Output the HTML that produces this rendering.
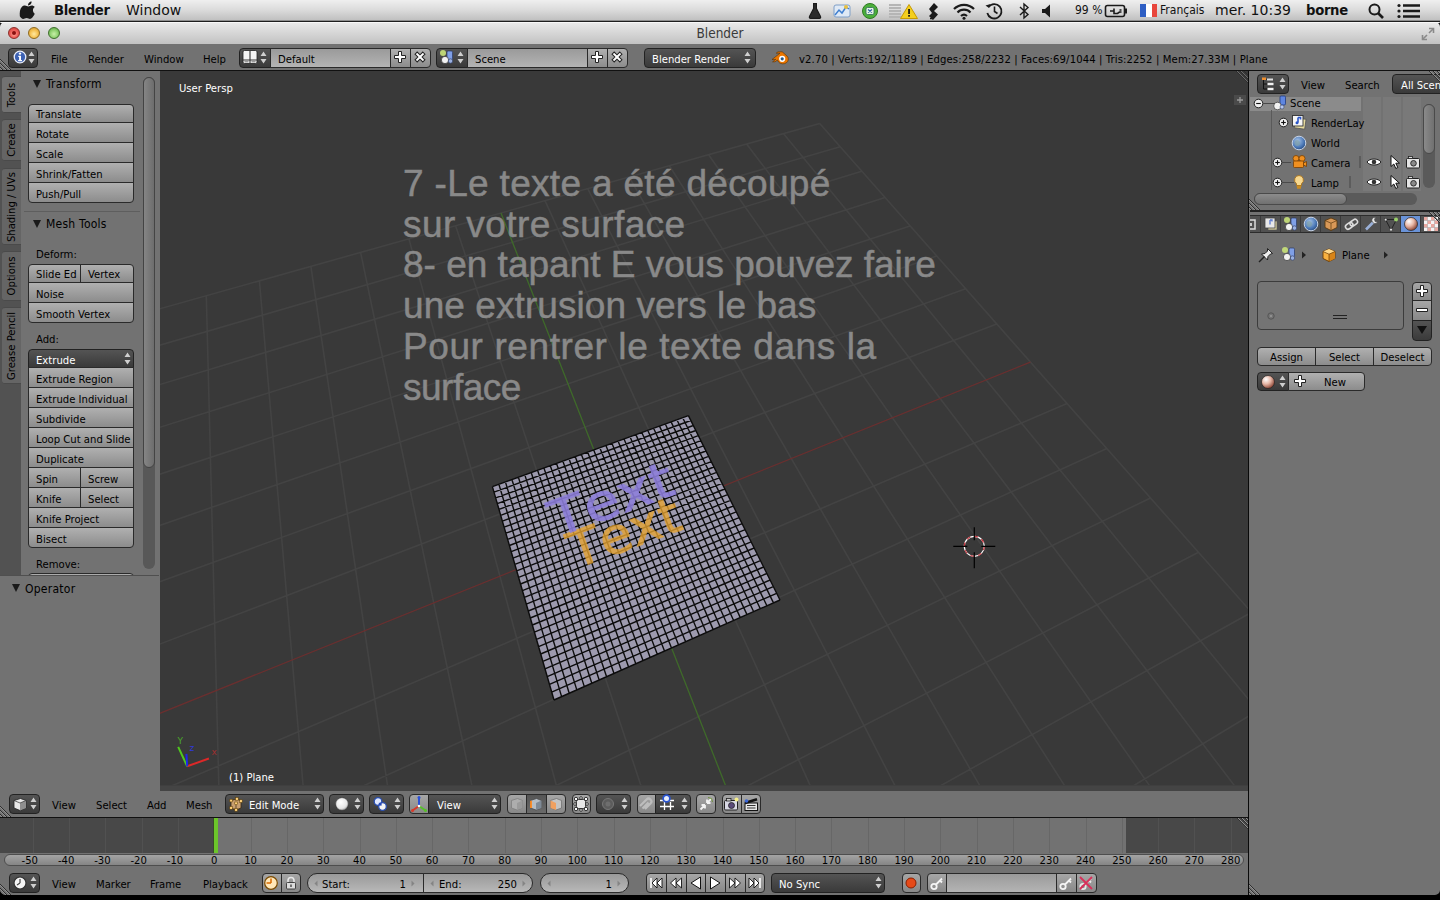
<!DOCTYPE html><html lang="fr"><head><meta charset="utf-8"><title>Blender</title><style>

*{box-sizing:border-box;margin:0;padding:0}
html,body{width:1440px;height:900px;overflow:hidden;background:#727272}
#titlebar:before{content:"";position:absolute;left:0;top:0;width:1440px;height:1px;background:#f8f8f8;border-radius:5px 5px 0 0}
body{position:relative;font-family:"DejaVu Sans Condensed","DejaVu Sans","Liberation Sans",sans-serif;font-size:11.2px;letter-spacing:0;color:#000;line-height:1}
.abs{position:absolute}
#macbar{left:0;top:0;width:1440px;height:22px;background:linear-gradient(#efefef,#dcdcdc 45%,#bebebe);border-bottom:1px solid #1e1e1e;box-shadow:inset 0 -1px 0 #8e8e8e}
#macbar span{position:absolute;top:3px;font-size:14px;letter-spacing:0;font-family:"DejaVu Sans","Liberation Sans",sans-serif;color:#111;white-space:nowrap}
#titlebar{left:0;top:22px;width:1440px;height:22px;background:linear-gradient(#ebebeb,#d6d6d6 50%,#c2c2c2);border-radius:5px 5px 0 0}
#titlebar .t{position:absolute;left:0;width:1440px;text-align:center;top:5px;font-size:13.5px;letter-spacing:0;color:#3a3a3a;font-family:"DejaVu Sans Condensed","DejaVu Sans","Liberation Sans",sans-serif}
.tl{position:absolute;top:5px;width:12px;height:12px;border-radius:6px;border:1px solid #555}
.hdr{background:#727272}
.txt{position:absolute;white-space:nowrap}
.w{color:#fff}
.btn{position:absolute;height:21px;border:1px solid #2a2a2a;background:linear-gradient(#b0b0b0,#8c8c8c);padding:4px 0 0 7px;white-space:nowrap;overflow:hidden}
.rt{border-top-left-radius:4px;border-top-right-radius:4px}
.rb{height:20px;border-bottom-left-radius:4px;border-bottom-right-radius:4px}
.rl{border-top-left-radius:4px;border-bottom-left-radius:4px}
.rr{border-top-right-radius:4px;border-bottom-right-radius:4px}
.ra{border-radius:4px}
.menu{position:absolute;height:19px;border:1px solid #222;background:linear-gradient(#545454,#3a3a3a);color:#fff;padding:4px 0 0 7px;white-space:nowrap;overflow:hidden}
.fld{position:absolute;height:19px;border:1px solid #2a2a2a;background:linear-gradient(#9a9a9a,#b4b4b4);padding:5px 0 0 7px;white-space:nowrap;overflow:hidden}
.num{position:absolute;height:19px;border:1px solid #2a2a2a;background:linear-gradient(#999,#b8b8b8);white-space:nowrap;overflow:hidden}
.ph{position:absolute;font-size:12px;letter-spacing:.25px;white-space:nowrap}
.tri{position:absolute;width:0;height:0;border-left:4px solid transparent;border-right:4px solid transparent;border-top:8px solid #1a1a1a}
.ud{position:absolute;width:7px;height:12px}
.tab{position:absolute;left:2px;width:19px;background:#646464;border-radius:3px 0 0 3px;border-top:1px solid #4a4a4a;border-bottom:1px solid #4a4a4a}
.tab span{position:absolute;left:50%;top:50%;transform:translate(-50%,-50%) rotate(-90deg);white-space:nowrap}

</style></head><body>
<div id="macbar" class="abs"><svg class="abs" style="left:19px;top:1px" width="18" height="19" viewBox="0 0 18 19"><path d="M12.2 0.5c.1 1.2-.4 2.300-1.100 3.100-.7.8-1.800 1.400-2.800 1.300-.1-1.100.4-2.300 1.100-3 .7-.8 1.900-1.400 2.800-1.400zM15.600 13.800c-.5 1.100-.7 1.600-1.400 2.600-.9 1.400-2.200 3.100-3.700 3.100-1.400 0-1.800-.9-3.700-.9s-2.300.9-3.700.9c-1.600 0-2.800-1.600-3.700-2.900C-.9 12.800-.6 8.400 1.500 6.500c1-1 2.300-1.500 3.500-1.500 1.500 0 2.400.9 3.700.9 1.200 0 1.900-.9 3.700-.9 1.100 0 2.300.6 3.200 1.600-2.800 1.600-2.300 5.600 0 7.200z" fill="#1a1a1a" transform="scale(.92) translate(1.5,0)"/></svg><svg class="abs" style="left:806px;top:2px" width="18" height="18" viewBox="0 0 18 18"><path d="M7 1.500h4M7.600 1.500v5L3.500 14.500a1.200 1.200 0 0 0 1 1.800h9a1.200 1.200 0 0 0 1-1.800L10.400 6.500v-5" fill="#2a2a2a" stroke="#1a1a1a" stroke-width="1.200"/></svg><svg class="abs" style="left:832px;top:2px" width="20" height="18" viewBox="0 0 20 18"><rect x="2" y="3" width="16" height="12" rx="2" fill="#dfe9f5" stroke="#7f9fc8" stroke-width="1"/><path d="M3 13l4-5 3 3 4-6 3 2" fill="none" stroke="#3f7fd0" stroke-width="1.500"/><circle cx="14" cy="5" r="2" fill="#e8c040"/></svg><svg class="abs" style="left:861px;top:2px" width="18" height="18" viewBox="0 0 18 18"><circle cx="9" cy="9" r="7.500" fill="#4caf3a" stroke="#2e7a22" stroke-width="1"/><rect x="5" y="5.500" width="8" height="7" rx="1.500" fill="#e8f6e0" stroke="#2e6a5a" stroke-width=".8"/><path d="M7 7.500l4 3M11 7.500l-4 3" stroke="#2a5aa8" stroke-width="1.200"/></svg><svg class="abs" style="left:888px;top:2px" width="32" height="18" viewBox="0 0 32 18"><path d="M1 3h12M1 6h12M1 9h12M1 12h12M1 15h12" stroke="#b5b5b5" stroke-width="2"/><path d="M21 2.500L29.500 16.500H12.500z" fill="#f4cf1e" stroke="#c79a00" stroke-width="1" stroke-linejoin="round"/><rect x="20.200" y="7" width="1.700" height="5" fill="#111"/><rect x="20.200" y="13" width="1.700" height="1.700" fill="#111"/></svg><svg class="abs" style="left:925px;top:1px" width="18" height="20" viewBox="0 0 18 20"><path d="M9 2l4 4-4 4 4 3.500-5 5.500-4-4 3-3-3-4z" fill="#1a1a1a"/><path d="M5 17.500h3" stroke="#1a1a1a" stroke-width="1.500"/></svg><svg class="abs" style="left:952px;top:2px" width="24" height="18" viewBox="0 0 24 18"><path d="M2 7a14 14 0 0 1 20 0" fill="none" stroke="#1a1a1a" stroke-width="2.200"/><path d="M5.500 10.500a9 9 0 0 1 13 0" fill="none" stroke="#1a1a1a" stroke-width="2.200"/><path d="M9 14a4.500 4.500 0 0 1 6 0" fill="none" stroke="#1a1a1a" stroke-width="2.200"/><circle cx="12" cy="16.300" r="1.500" fill="#1a1a1a"/></svg><svg class="abs" style="left:984px;top:1px" width="20" height="20" viewBox="0 0 20 20"><path d="M4.500 6A7.200 7.200 0 1 1 3.300 12" fill="none" stroke="#1a1a1a" stroke-width="1.800"/><path d="M1.500 4.500l3.500 2.500 1.500-4z" fill="#1a1a1a"/><path d="M10.500 5.500v5l3 2" fill="none" stroke="#1a1a1a" stroke-width="1.600"/></svg><svg class="abs" style="left:1017px;top:2px" width="14" height="18" viewBox="0 0 14 18"><path d="M3 5l8 7.500-4 3.500V2l4 3.500-8 7.500" fill="none" stroke="#1a1a1a" stroke-width="1.400"/></svg><svg class="abs" style="left:1040px;top:3px" width="16" height="16" viewBox="0 0 16 16"><path d="M2 6h3l5-4.500v13L5 10H2z" fill="#1a1a1a"/></svg><svg class="abs" style="left:1104px;top:3px" width="24" height="16" viewBox="0 0 24 16"><rect x="1.500" y="2.500" width="19" height="11" rx="2" fill="none" stroke="#1a1a1a" stroke-width="1.600"/><rect x="21" y="5.500" width="2" height="5" fill="#1a1a1a"/><path d="M6 8h4M10 5.500v5h3.500l2-1.500h2M15.500 7h2" stroke="#1a1a1a" stroke-width="1.600" fill="none"/></svg><svg class="abs" style="left:1140px;top:4px" width="18" height="14" viewBox="0 0 18 14"><rect x="0" y="0" width="6" height="13" fill="#2f5fc4"/><rect x="6" y="0" width="6" height="13" fill="#fff"/><rect x="12" y="0" width="5" height="13" fill="#e8463c"/></svg><svg class="abs" style="left:1367px;top:2px" width="18" height="18" viewBox="0 0 18 18"><circle cx="7.500" cy="7.500" r="5" fill="none" stroke="#1a1a1a" stroke-width="2"/><path d="M11 11l5 5" stroke="#1a1a1a" stroke-width="2.600"/></svg><svg class="abs" style="left:1397px;top:3px" width="24" height="16" viewBox="0 0 24 16"><path d="M6 2.500h17M6 8h17M6 13.500h17" stroke="#1a1a1a" stroke-width="2.600"/><circle cx="2" cy="2.500" r="1.600" fill="#1a1a1a"/><circle cx="2" cy="8" r="1.600" fill="#1a1a1a"/><circle cx="2" cy="13.500" r="1.600" fill="#1a1a1a"/></svg><span style="left:54px;top:4px;font-weight:bold;font-size:13.200px;letter-spacing:-.3px">Blender</span><span style="left:126px">Window</span><span style="left:1075px;font-size:12px;top:4px;font-family:'DejaVu Sans Condensed',sans-serif">99 %</span><span style="left:1160px;font-size:12px;top:4px;font-family:'DejaVu Sans Condensed',sans-serif">Français</span><span style="left:1215px">mer. 10:39</span><span style="left:1306px;top:4px;font-weight:bold;font-size:13.200px;letter-spacing:-.3px">borne</span></div>
<div class="abs" style="left:0;top:22px;width:1440px;height:6px;background:#111"></div><div id="titlebar" class="abs"><div class="tl" style="left:8px;border-color:#8c2e2a;background:radial-gradient(circle at 50% 60%,#ffb0a0 0,#f0605a 45%,#c43a34 100%)"></div><div class="abs" style="left:12px;top:9px;width:4px;height:4px;border-radius:2px;background:#8a0f0f"></div><div class="tl" style="left:28px;border-color:#8f6a1e;background:radial-gradient(circle at 50% 60%,#ffe9a0 0,#f4c050 50%,#c8922a 100%)"></div><div class="tl" style="left:48px;border-color:#3f6e2c;background:radial-gradient(circle at 50% 60%,#c8f0a8 0,#8fd070 50%,#4f9a38 100%)"></div><div class="t">Blender</div><svg class="abs" style="left:1421px;top:5px" width="14" height="14" viewBox="0 0 14 14"><path d="M8 1.500h4.500V6M6 12.500H1.500V8" fill="none" stroke="#8a8a8a" stroke-width="1.600"/><path d="M12 2L8 6M2 12l4-4" stroke="#8a8a8a" stroke-width="1.600"/></svg></div>
<div class="abs hdr" style="left:0;top:44px;width:1440px;height:26px"></div><div class="abs" style="left:0;top:70px;width:1440px;height:1px;background:#111"></div><div class="menu ra" style="left:8px;top:48px;width:30px;height:20px"></div><svg class="abs" style="left:28px;top:51px" width="7" height="13" viewBox="0 0 7 13"><path d="M3.5 0.5L6.5 5H0.5Z M3.5 12.5L6.5 8H0.5Z" fill="#cfcfcf"/></svg><div class="txt" style="left:51px;top:54px">File</div><div class="txt" style="left:88px;top:54px">Render</div><div class="txt" style="left:144px;top:54px">Window</div><div class="txt" style="left:203px;top:54px">Help</div><div class="menu rl" style="left:239px;top:48px;width:32px;height:20px"></div><svg class="abs" style="left:260px;top:51px" width="7" height="13" viewBox="0 0 7 13"><path d="M3.5 0.5L6.5 5H0.5Z M3.5 12.5L6.5 8H0.5Z" fill="#cfcfcf"/></svg><div class="fld" style="left:270px;top:48px;width:121px;height:20px">Default</div><div class="btn" style="left:390px;top:48px;width:21px;height:20px"></div><div class="btn rr" style="left:410px;top:48px;width:21px;height:20px"></div><div class="menu rl" style="left:436px;top:48px;width:32px;height:20px"></div><svg class="abs" style="left:457px;top:51px" width="7" height="13" viewBox="0 0 7 13"><path d="M3.5 0.5L6.5 5H0.5Z M3.5 12.5L6.5 8H0.5Z" fill="#cfcfcf"/></svg><div class="fld" style="left:467px;top:48px;width:121px;height:20px">Scene</div><div class="btn" style="left:587px;top:48px;width:21px;height:20px"></div><div class="btn rr" style="left:607px;top:48px;width:21px;height:20px"></div><div class="menu ra" style="left:644px;top:48px;width:112px;height:20px;padding-top:5px">Blender Render</div><svg class="abs" style="left:744px;top:51px" width="7" height="13" viewBox="0 0 7 13"><path d="M3.5 0.5L6.5 5H0.5Z M3.5 12.5L6.5 8H0.5Z" fill="#cfcfcf"/></svg><svg class="abs" style="left:12px;top:49px" width="16" height="16" viewBox="0 0 16 16"><circle cx="8" cy="8" r="5.800" fill="#3d62b3" stroke="#e8eefc" stroke-width="1.300"/><circle cx="8" cy="4.600" r="1.200" fill="#fff"/><path d="M6.300 6.800h2.700v4.200h1v1.200h-3.900v-1.200h1v-3h-.8z" fill="#fff"/></svg><svg class="abs" style="left:242px;top:49px" width="16" height="16" viewBox="0 0 16 16"><rect x="1" y="1.500" width="14" height="13" rx="1.500" fill="#f4f4f4" stroke="#222" stroke-width=".8"/><path d="M8 1.500v13M1 11h14" stroke="#333" stroke-width="1.100"/><path d="M2.500 12.800h4M9.500 12.800h4" stroke="#555" stroke-width=".8"/></svg><svg class="abs" style="left:439px;top:49px" width="16" height="16" viewBox="0 0 16 16"><circle cx="4" cy="4" r="3" fill="#c9e27a" opacity=".9"/><rect x="8" y="2" width="5.500" height="9" rx="1.200" fill="#7f9fe6" stroke="#2b3a66" stroke-width=".7"/><circle cx="6" cy="11" r="3.600" fill="#f2f2f2" stroke="#333" stroke-width=".7"/><circle cx="11.500" cy="12" r="2.200" fill="#9ab0e0" stroke="#2b3a66" stroke-width=".6"/></svg><svg class="abs" style="left:393px;top:50px" width="14" height="14" viewBox="0 0 14 14"><path d="M5.500 1.500h3v4h4v3h-4v4h-3v-4h-4v-3h4z" fill="#fff" stroke="#222" stroke-width="1"/></svg><svg class="abs" style="left:413px;top:50px" width="14" height="14" viewBox="0 0 14 14"><path d="M5.500 1.500h3v4h4v3h-4v4h-3v-4h-4v-3h4z" fill="#fff" stroke="#222" stroke-width="1" transform="rotate(45 7 7)"/></svg><svg class="abs" style="left:590px;top:50px" width="14" height="14" viewBox="0 0 14 14"><path d="M5.500 1.500h3v4h4v3h-4v4h-3v-4h-4v-3h4z" fill="#fff" stroke="#222" stroke-width="1"/></svg><svg class="abs" style="left:610px;top:50px" width="14" height="14" viewBox="0 0 14 14"><path d="M5.500 1.500h3v4h4v3h-4v4h-3v-4h-4v-3h4z" fill="#fff" stroke="#222" stroke-width="1" transform="rotate(45 7 7)"/></svg><svg class="abs" style="left:771px;top:50px" width="18" height="16" viewBox="0 0 18 16"><path d="M1 9.500L9 3.200H5.200L7 1.800h4.200L16 6c1.500 1.500 1.700 3.800.6 5.500-1.400 2.200-4.600 3-7.200 1.800-1.500-.7-2.500-1.900-2.900-3.300L4 11.800H1.600L4.800 9.300z" fill="#ea7600" stroke="#5a3000" stroke-width=".6"/><circle cx="11.200" cy="8.800" r="3.100" fill="#fff"/><circle cx="11.200" cy="8.800" r="1.600" fill="#265787"/></svg><div class="txt" style="left:799px;top:54px;letter-spacing:.12px">v2.70 | Verts:192/1189 | Edges:258/2232 | Faces:69/1044 | Tris:2252 | Mem:27.33M | Plane</div>
<div class="abs" style="left:0;top:71px;width:21px;height:504px;background:#525252"></div><div class="abs" style="left:21px;top:71px;width:138px;height:504px;background:#727272"></div><div class="tab" style="top:76px;height:37px;background:#727272"><span>Tools</span></div><div class="tab" style="top:119px;height:42px;background:#656565"><span>Create</span></div><div class="tab" style="top:168px;height:77px;background:#656565"><span>Shading / UVs</span></div><div class="tab" style="top:251px;height:50px;background:#656565"><span>Options</span></div><div class="tab" style="top:307px;height:77px;background:#656565"><span>Grease Pencil</span></div><div class="tri" style="left:33px;top:80px"></div><div class="ph" style="left:46px;top:78px">Transform</div><div class="btn" style="left:28px;top:104px;width:106px;height:19px;padding-top:4px;border-top-left-radius:4px;border-top-right-radius:4px;">Translate</div><div class="btn" style="left:28px;top:122px;width:106px;height:21px;padding-top:6px;">Rotate</div><div class="btn" style="left:28px;top:142px;width:106px;height:21px;padding-top:6px;">Scale</div><div class="btn" style="left:28px;top:162px;width:106px;height:21px;padding-top:6px;">Shrink/Fatten</div><div class="btn" style="left:28px;top:182px;width:106px;height:21px;padding-top:6px;border-bottom-left-radius:4px;border-bottom-right-radius:4px;">Push/Pull</div><div class="abs" style="left:24px;top:211px;width:116px;height:1px;background:#5e5e5e"></div><div class="tri" style="left:33px;top:220px"></div><div class="ph" style="left:46px;top:218px">Mesh Tools</div><div class="txt" style="left:36px;top:249px">Deform:</div><div class="btn" style="left:28px;top:264px;width:53px;height:19px;padding-top:4px;border-top-left-radius:4px;">Slide Ed</div><div class="btn" style="left:80px;top:264px;width:54px;height:19px;padding-top:4px;border-top-right-radius:4px;">Vertex</div><div class="btn" style="left:28px;top:282px;width:106px;height:21px;padding-top:6px;">Noise</div><div class="btn" style="left:28px;top:302px;width:106px;height:21px;padding-top:6px;border-bottom-left-radius:4px;border-bottom-right-radius:4px;">Smooth Vertex</div><div class="txt" style="left:36px;top:334px">Add:</div><div class="menu" style="left:28px;top:349px;width:106px;height:19px;padding-top:5px;border-top-left-radius:4px;border-top-right-radius:4px;">Extrude</div><div class="btn" style="left:28px;top:367px;width:106px;height:21px;padding-top:6px;">Extrude Region</div><div class="btn" style="left:28px;top:387px;width:106px;height:21px;padding-top:6px;">Extrude Individual</div><div class="btn" style="left:28px;top:407px;width:106px;height:21px;padding-top:6px;">Subdivide</div><div class="btn" style="left:28px;top:427px;width:106px;height:21px;padding-top:6px;">Loop Cut and Slide</div><div class="btn" style="left:28px;top:447px;width:106px;height:21px;padding-top:6px;">Duplicate</div><div class="btn" style="left:28px;top:467px;width:53px;height:21px;padding-top:6px;">Spin</div><div class="btn" style="left:80px;top:467px;width:54px;height:21px;padding-top:6px;">Screw</div><div class="btn" style="left:28px;top:487px;width:53px;height:21px;padding-top:6px;">Knife</div><div class="btn" style="left:80px;top:487px;width:54px;height:21px;padding-top:6px;">Select</div><div class="btn" style="left:28px;top:507px;width:106px;height:21px;padding-top:6px;">Knife Project</div><div class="btn" style="left:28px;top:527px;width:106px;height:21px;padding-top:6px;border-bottom-left-radius:4px;border-bottom-right-radius:4px;">Bisect</div><svg class="abs" style="left:124px;top:352px" width="7" height="13" viewBox="0 0 7 13"><path d="M3.5 0.5L6.5 5H0.5Z M3.5 12.5L6.5 8H0.5Z" fill="#cfcfcf"/></svg><div class="txt" style="left:36px;top:559px">Remove:</div><div class="btn rt" style="left:28px;top:573px;width:106px;height:3px"></div><div class="abs" style="left:143px;top:77px;width:12px;height:492px;border-radius:6px;background:#585858"></div><div class="abs" style="left:143px;top:77px;width:12px;height:391px;border-radius:6px;background:linear-gradient(90deg,#858585,#6d6d6d);border:1px solid #444"></div><div class="abs" style="left:0;top:575px;width:159px;height:216px;background:#727272;border-top:1px solid #4f4f4f"></div><div class="tri" style="left:12px;top:584px"></div><div class="ph" style="left:25px;top:583px">Operator</div>
<div class="abs" style="left:160px;top:71px;width:1088px;height:720px;background:#393939;overflow:hidden"><svg class="abs" style="left:0;top:0" width="1088" height="720" viewBox="0 0 1088 720"><path d="M-220.0 1860.8L-65.4 256.1M-220.0 1860.8L1289.9 765.9M-61.9 1746.1L-8.6 240.1M-196.1 1613.1L1216.0 682.3M82.5 1641.4L46.3 224.7M-176.5 1409.6L1150.3 607.9M215.0 1545.3L99.4 209.8M-160.2 1239.5L1091.5 541.3M337.0 1456.8L150.9 195.4M-146.3 1095.1L1038.5 481.3M449.7 1375.1L200.6 181.4M-134.3 971.1L990.5 427.0M554.2 1299.4L248.9 167.8M-123.9 863.3L946.8 377.6M651.2 1229.0L295.6 154.7M-114.8 768.9L907.0 332.5M826.0 1102.3L385.0 129.6M-99.6 611.1L836.7 252.9M905.0 1045.0L427.7 117.7M-93.2 544.6L805.6 217.7M979.1 991.2L469.1 106.0M-87.5 484.6L776.8 185.1M1048.7 940.7L509.4 94.7M-82.2 430.3L750.0 154.9M1114.3 893.2L548.6 83.7M-77.5 380.8L725.1 126.6M1176.1 848.3L586.6 73.0M-73.1 335.7L701.9 100.3M1234.6 806.0L623.6 62.7M-69.1 294.2L680.1 75.7M1289.9 765.9L659.7 52.5M-65.4 256.1L659.7 52.5" stroke="#434343" stroke-width="1.6" fill="none"/>
<path d="M-106.8 685.4L870.4 291.1" stroke="#6b2f2f" stroke-width="1.3" fill="none"/>
<path d="M741.6 1163.5L341.0 142.0" stroke="#3f6a2a" stroke-width="1.3" fill="none"/>
<polygon points="332.4,415.6 528.4,344.6 620.0,529.0 394.0,629.0" fill="#9d9aae"/><path d="M332.4 415.6L528.4 344.6M332.4 415.6L394.0 629.0M334.0 421.2L530.8 349.5M338.9 413.2L401.6 625.6M335.7 426.9L533.3 354.5M345.4 410.9L409.2 622.3M337.3 432.6L535.8 359.5M351.9 408.5L416.8 618.9M339.0 438.4L538.3 364.6M358.4 406.2L424.3 615.6M340.7 444.3L540.9 369.7M364.8 403.9L431.8 612.3M342.4 450.2L543.4 374.8M371.2 401.5L439.2 609.0M344.1 456.2L546.0 380.0M377.6 399.2L446.6 605.7M345.9 462.2L548.6 385.3M383.9 396.9L454.0 602.5M347.6 468.3L551.3 390.6M390.2 394.6L461.3 599.2M349.4 474.5L553.9 396.0M396.5 392.4L468.6 596.0M351.2 480.7L556.6 401.4M402.8 390.1L475.8 592.8M353.0 487.1L559.3 406.9M409.0 387.8L483.0 589.6M354.9 493.4L562.1 412.4M415.2 385.6L490.2 586.4M356.7 499.9L564.8 418.0M421.4 383.4L497.3 583.3M358.6 506.4L567.6 423.6M427.6 381.1L504.5 580.1M360.5 513.0L570.5 429.3M433.7 378.9L511.5 577.0M362.4 519.6L573.3 435.0M439.8 376.7L518.6 573.9M364.4 526.3L576.2 440.9M445.9 374.5L525.6 570.8M366.3 533.1L579.1 446.7M451.9 372.3L532.5 567.7M368.3 540.0L582.1 452.7M458.0 370.1L539.4 564.6M370.3 547.0L585.1 458.7M464.0 367.9L546.3 561.6M372.4 554.0L588.1 464.7M470.0 365.8L553.2 558.6M374.4 561.1L591.1 470.8M475.9 363.6L560.0 555.5M376.5 568.3L594.2 477.0M481.8 361.5L566.8 552.5M378.6 575.6L597.3 483.3M487.7 359.3L573.6 549.5M380.7 583.0L600.4 489.6M493.6 357.2L580.3 546.6M382.9 590.4L603.6 496.0M499.5 355.1L587.0 543.6M385.0 597.9L606.8 502.5M505.3 353.0L593.7 540.7M387.2 605.6L610.1 509.0M511.1 350.9L600.3 537.7M389.5 613.3L613.3 515.6M516.9 348.8L606.9 534.8M391.7 621.1L616.6 522.3M522.7 346.7L613.5 531.9M394.0 629.0L620.0 529.0M528.4 344.6L620.0 529.0" stroke="#0c0c0c" stroke-width="1.4" fill="none"/><g opacity=".78"><text transform="matrix(0.9880,-0.3620,0.3300,0.9400,415.5,498.0)" font-family="DejaVu Sans,Liberation Sans,sans-serif" font-size="50" fill="#eaa631" stroke="#eaa631" stroke-width="0.9" style="font-kerning:none">Text</text></g><g opacity=".88"><text transform="matrix(1.0940,-0.4000,0.3300,0.9400,396.6,466.5)" font-family="DejaVu Sans,Liberation Sans,sans-serif" font-size="50" fill="#8e7fdc" stroke="#8e7fdc" stroke-width="0.9" style="font-kerning:none">Text</text></g><g transform="translate(814.3,475.3)"><circle r="10" fill="none" stroke="#fff" stroke-width="1.2"/><circle r="10" fill="none" stroke="#c8323c" stroke-width="1.2" stroke-dasharray="3.9 3.9"/><path d="M-21 0H-7M7 0H21M0 -19V-6M0 6V22" stroke="#000" stroke-width="1.2"/></g><g transform="translate(1.5,2)"><g stroke-width="2" fill="none"><path d="M25.700 693.300L47.400 685.500" stroke="#dc2828"/><path d="M25.700 693.300L16.700 673.900" stroke="#50c81e"/><path d="M25.700 693.300L24.900 680.900" stroke="#1e28e6"/></g><text x="50" y="682" font-size="9" fill="#a03030" font-family="DejaVu Sans,sans-serif">x</text><text x="16" y="671" font-size="9" fill="#4aa52a" font-family="DejaVu Sans,sans-serif">Y</text><text x="28" y="678" font-size="9" fill="#3038d8" font-family="DejaVu Sans,sans-serif">z</text></g><g stroke="#2c2c2c" stroke-width="1"><path d="M1076 0l12 12M1080 0l8 8M1084 0l4 4"/></g><g stroke="#6a6a6a" stroke-width="1"><path d="M1077 0l11 11M1081 0l7 7"/></g><rect x="1074" y="24" width="12" height="10" fill="#4a4a4a"/><path d="M1077 29h6M1080 26v6" stroke="#9a9a9a" stroke-width="1.3"/></svg><div class="abs" style="left:0;top:714px;width:1088px;height:6px;background:#444;border-top:1px solid #3f3f3f"></div><div class="txt w" style="left:19px;top:12px">User Persp</div><div class="txt w" style="left:69px;top:701px">(1) Plane</div><div class="txt" style="left:243px;top:93.8px;font-family:'Liberation Sans',sans-serif;font-size:37px;letter-spacing:0.32px;color:#898989;-webkit-text-stroke:.5px #898989">7 -Le texte a été découpé</div><div class="txt" style="left:243px;top:134.6px;font-family:'Liberation Sans',sans-serif;font-size:37px;letter-spacing:0.41px;color:#898989;-webkit-text-stroke:.5px #898989">sur votre surface</div><div class="txt" style="left:243px;top:175.4px;font-family:'Liberation Sans',sans-serif;font-size:37px;letter-spacing:0px;color:#898989;-webkit-text-stroke:.5px #898989">8- en tapant E vous pouvez faire</div><div class="txt" style="left:243px;top:216.2px;font-family:'Liberation Sans',sans-serif;font-size:37px;letter-spacing:0.08px;color:#898989;-webkit-text-stroke:.5px #898989">une extrusion vers le bas</div><div class="txt" style="left:243px;top:257.0px;font-family:'Liberation Sans',sans-serif;font-size:37px;letter-spacing:0.59px;color:#898989;-webkit-text-stroke:.5px #898989">Pour rentrer le texte dans la</div><div class="txt" style="left:243px;top:297.8px;font-family:'Liberation Sans',sans-serif;font-size:37px;letter-spacing:-0.5px;color:#898989;-webkit-text-stroke:.5px #898989">surface</div></div>
<div class="abs hdr" style="left:0;top:791px;width:1248px;height:26px"></div><div class="abs" style="left:0;top:817px;width:1248px;height:1px;background:#111"></div><div class="menu ra" style="left:9px;top:794px;width:31px;height:20px;padding-left:7px;padding-top:5px"></div><svg class="abs" style="left:30px;top:797px" width="7" height="13" viewBox="0 0 7 13"><path d="M3.5 0.5L6.5 5H0.5Z M3.5 12.5L6.5 8H0.5Z" fill="#cfcfcf"/></svg><div class="txt" style="left:52px;top:800px">View</div><div class="txt" style="left:96px;top:800px">Select</div><div class="txt" style="left:147px;top:800px">Add</div><div class="txt" style="left:186px;top:800px">Mesh</div><div class="menu ra" style="left:225px;top:794px;width:99px;height:20px;padding-left:23px;padding-top:5px">Edit Mode</div><svg class="abs" style="left:314px;top:797px" width="7" height="13" viewBox="0 0 7 13"><path d="M3.5 0.5L6.5 5H0.5Z M3.5 12.5L6.5 8H0.5Z" fill="#cfcfcf"/></svg><div class="menu ra" style="left:329px;top:794px;width:35px;height:20px;padding-left:7px;padding-top:5px"></div><svg class="abs" style="left:354px;top:797px" width="7" height="13" viewBox="0 0 7 13"><path d="M3.5 0.5L6.5 5H0.5Z M3.5 12.5L6.5 8H0.5Z" fill="#cfcfcf"/></svg><div class="menu ra" style="left:369px;top:794px;width:35px;height:20px;padding-left:7px;padding-top:5px"></div><svg class="abs" style="left:394px;top:797px" width="7" height="13" viewBox="0 0 7 13"><path d="M3.5 0.5L6.5 5H0.5Z M3.5 12.5L6.5 8H0.5Z" fill="#cfcfcf"/></svg><div class="btn rl" style="left:409px;top:794px;width:20px;height:20px;padding:0;background:linear-gradient(#a6a6a6,#888)"></div><div class="menu rr" style="left:428px;top:794px;width:73px;height:20px;padding-left:8px;padding-top:5px">View</div><svg class="abs" style="left:491px;top:797px" width="7" height="13" viewBox="0 0 7 13"><path d="M3.5 0.5L6.5 5H0.5Z M3.5 12.5L6.5 8H0.5Z" fill="#cfcfcf"/></svg><div class="btn rl" style="left:507px;top:794px;width:20px;height:20px;padding:0;background:linear-gradient(#a6a6a6,#888)"></div><div class="btn " style="left:526px;top:794px;width:21px;height:20px;padding:0;background:linear-gradient(#555,#6a6a6a)"></div><div class="btn rr" style="left:546px;top:794px;width:20px;height:20px;padding:0;background:linear-gradient(#a6a6a6,#888)"></div><div class="btn ra" style="left:572px;top:794px;width:19px;height:20px;padding:0;background:linear-gradient(#a6a6a6,#888)"></div><div class="menu ra" style="left:596px;top:794px;width:35px;height:20px;padding-left:7px;padding-top:5px"></div><svg class="abs" style="left:621px;top:797px" width="7" height="13" viewBox="0 0 7 13"><path d="M3.5 0.5L6.5 5H0.5Z M3.5 12.5L6.5 8H0.5Z" fill="#cfcfcf"/></svg><div class="btn rl" style="left:637px;top:794px;width:19px;height:20px;padding:0;background:linear-gradient(#a6a6a6,#888)"></div><div class="menu rr" style="left:655px;top:794px;width:36px;height:20px;padding-left:7px;padding-top:5px"></div><svg class="abs" style="left:681px;top:797px" width="7" height="13" viewBox="0 0 7 13"><path d="M3.5 0.5L6.5 5H0.5Z M3.5 12.5L6.5 8H0.5Z" fill="#cfcfcf"/></svg><div class="btn ra" style="left:696px;top:794px;width:20px;height:20px;padding:0;background:linear-gradient(#a6a6a6,#888)"></div><div class="btn rl" style="left:722px;top:794px;width:20px;height:20px;padding:0;background:linear-gradient(#a6a6a6,#888)"></div><div class="btn rr" style="left:741px;top:794px;width:20px;height:20px;padding:0;background:linear-gradient(#a6a6a6,#888)"></div><svg class="abs" style="left:12px;top:796px" width="16" height="16" viewBox="0 0 16 16"><path d="M2 4.500L8.500 2.500 14 4.500V12L8 14.500 2 12z" fill="#e9e9e9" stroke="#222" stroke-width=".8"/><path d="M8 7v7.500L14 12V4.500z" fill="#8f8f8f"/><path d="M2 4.500L8 7 14 4.500" fill="none" stroke="#333" stroke-width=".7"/></svg><svg class="abs" style="left:228px;top:796px" width="16" height="16" viewBox="0 0 16 16"><path d="M3 4.500L9 3l4 2v7l-5 2-5-2z" fill="#c9a071" stroke="#3a2a10" stroke-width=".8"/><path d="M8 7v7" stroke="#3a2a10" stroke-width=".7"/><g fill="#ffd27a" stroke="#5a3a00" stroke-width=".5"><rect x="1.800" y="3.300" width="2.600" height="2.600"/><rect x="7.600" y="1.600" width="2.600" height="2.600"/><rect x="11.600" y="3.800" width="2.600" height="2.600"/><rect x="6.800" y="6" width="2.600" height="2.600"/><rect x="1.800" y="10.600" width="2.600" height="2.600"/><rect x="6.800" y="12.600" width="2.600" height="2.600"/></g></svg><svg class="abs" style="left:334px;top:796px" width="16" height="16" viewBox="0 0 16 16"><defs><radialGradient id="sg" cx=".4" cy=".35" r=".7"><stop offset="0" stop-color="#fff"/><stop offset=".7" stop-color="#e6e6e6"/><stop offset="1" stop-color="#9a9a9a"/></radialGradient></defs><circle cx="8" cy="8" r="6.300" fill="url(#sg)" stroke="#333" stroke-width=".5"/></svg><svg class="abs" style="left:372px;top:796px" width="16" height="16" viewBox="0 0 16 16"><circle cx="6" cy="5.500" r="3.800" fill="#dfe8ff" stroke="#2a4fb0" stroke-width="1.300"/><circle cx="10.500" cy="10.500" r="3.800" fill="#f4f4f4" stroke="#2a4fb0" stroke-width="1.300"/><rect x="6.800" y="6.800" width="2.800" height="2.800" fill="#2447b8"/></svg><svg class="abs" style="left:410px;top:795px" width="18" height="18" viewBox="0 0 18 18"><path d="M9 11V2.500" stroke="#2a50d8" stroke-width="2"/><path d="M9 11L2.500 15.500" stroke="#d83a2a" stroke-width="2"/><path d="M9 11L15.500 15.500" stroke="#57c02a" stroke-width="2"/><circle cx="9" cy="2.500" r="1.500" fill="#2a50d8"/><circle cx="2.500" cy="15.500" r="1.500" fill="#d83a2a"/><circle cx="15.500" cy="15.500" r="1.500" fill="#57c02a"/><circle cx="9" cy="11" r="1.300" fill="#fff"/></svg><svg class="abs" style="left:509px;top:796px" width="16" height="16" viewBox="0 0 16 16"><path d="M2.500 4.500L8.500 2.500 13.500 4.500V12L8 14 2.500 12z" fill="#adadad" stroke="#7a7a7a" stroke-width=".7"/><path d="M8 7v7L13.500 12V4.500z" fill="#9a9a9a"/></svg><svg class="abs" style="left:528px;top:796px" width="16" height="16" viewBox="0 0 16 16"><path d="M2.500 4.500L8.500 2.500 13.500 4.500V12L8 14 2.500 12z" fill="#b4bcc4" stroke="#444" stroke-width=".7"/><path d="M8 7v7L13.500 12V4.500z" fill="#7f8a96"/><path d="M3 4.800V12" stroke="#ff8a1e" stroke-width="1.800"/></svg><svg class="abs" style="left:548px;top:796px" width="16" height="16" viewBox="0 0 16 16"><path d="M2.500 4.500L8.500 2.500 13.500 4.500V12L8 14 2.500 12z" fill="#c4c4c4" stroke="#6a6a6a" stroke-width=".7"/><path d="M2.500 4.500L8 7v7L2.500 12z" fill="#f0a060"/></svg><svg class="abs" style="left:573px;top:796px" width="16" height="16" viewBox="0 0 16 16"><rect x="3.500" y="3.500" width="9" height="9" rx="2" fill="#e8e8e8" stroke="#222" stroke-width=".8"/><g fill="#fff" stroke="#111" stroke-width=".8"><circle cx="3" cy="3" r="1.700"/><circle cx="13" cy="3" r="1.700"/><circle cx="3" cy="13" r="1.700"/><circle cx="13" cy="13" r="1.700"/><circle cx="8" cy="2" r="1.300"/><circle cx="14" cy="8" r="1.300"/><circle cx="2" cy="8" r="1.300"/><circle cx="8" cy="14" r="1.300"/></g></svg><svg class="abs" style="left:600px;top:796px" width="16" height="16" viewBox="0 0 16 16"><circle cx="8" cy="8" r="5.500" fill="#5c5c5c" stroke="#777" stroke-width="1"/><circle cx="8" cy="8" r="2.500" fill="#6e6e6e"/></svg><svg class="abs" style="left:638px;top:796px" width="16" height="16" viewBox="0 0 16 16"><path d="M3 12.500L9.500 6a2.800 2.800 0 0 1 4 4L8 15.500M5.500 15L11.500 9" fill="none" stroke="#bdbdbd" stroke-width="2.200" transform="translate(-1,-2.500)"/></svg><svg class="abs" style="left:658px;top:794px" width="18" height="18" viewBox="0 0 18 18"><path d="M2 12.500h14M2 6.500h5M11 6.500h5M6.500 3v13M12.500 8v8" stroke="#fff" stroke-width="1.300"/><circle cx="8.500" cy="4.500" r="3.400" fill="#e8eefc" stroke="#2a55d0" stroke-width="1.800"/></svg><svg class="abs" style="left:698px;top:796px" width="16" height="16" viewBox="0 0 16 16"><path d="M13.500 2.500L9 7M9 7V3.500M9 7h3.500M2.500 13.500L7 9M7 9v3.500M7 9H3.500" fill="none" stroke="#f2f2f2" stroke-width="1.800"/><path d="M13.500 2.500L10 1.500M13.500 2.500l1 3.500" stroke="#6d8f3a" stroke-width="1"/></svg><svg class="abs" style="left:723px;top:796px" width="16" height="16" viewBox="0 0 16 16"><rect x="1.500" y="4.500" width="13" height="9.500" rx="1.200" fill="#d8d8e4" stroke="#222" stroke-width="1"/><rect x="3.500" y="2.500" width="4.500" height="2.500" fill="#ccc" stroke="#222" stroke-width=".8"/><circle cx="8.500" cy="9.500" r="3" fill="#5a4a7a" stroke="#222" stroke-width=".8"/><circle cx="13.500" cy="3.500" r="2" fill="#f7f08a"/></svg><svg class="abs" style="left:743px;top:796px" width="16" height="16" viewBox="0 0 16 16"><rect x="2" y="7" width="12.500" height="7.500" fill="#e8e8e8" stroke="#111" stroke-width="1"/><path d="M2 7L14 3.200" stroke="#111" stroke-width="2.600"/><path d="M4 9.500h8.500M4 12h8.500" stroke="#333" stroke-width="1"/><circle cx="3.500" cy="5" r="1.800" fill="#3a66d8"/></svg>
<div class="abs" style="left:0;top:818px;width:1248px;height:35px;background:#727272"></div><div class="abs" style="left:0;top:818px;width:214px;height:35px;background:#484848"></div><div class="abs" style="left:1126px;top:818px;width:122px;height:35px;background:#484848"></div><div class="abs" style="left:32.8px;top:818px;width:1px;height:35px;background:rgba(255,255,255,0.05)"></div><div class="abs" style="left:69.1px;top:818px;width:1px;height:35px;background:rgba(255,255,255,0.05)"></div><div class="abs" style="left:105.4px;top:818px;width:1px;height:35px;background:rgba(255,255,255,0.05)"></div><div class="abs" style="left:141.7px;top:818px;width:1px;height:35px;background:rgba(255,255,255,0.05)"></div><div class="abs" style="left:178.0px;top:818px;width:1px;height:35px;background:rgba(255,255,255,0.05)"></div><div class="abs" style="left:214.3px;top:818px;width:1px;height:35px;background:rgba(0,0,0,0.09)"></div><div class="abs" style="left:250.6px;top:818px;width:1px;height:35px;background:rgba(0,0,0,0.09)"></div><div class="abs" style="left:286.9px;top:818px;width:1px;height:35px;background:rgba(0,0,0,0.09)"></div><div class="abs" style="left:323.2px;top:818px;width:1px;height:35px;background:rgba(0,0,0,0.09)"></div><div class="abs" style="left:359.5px;top:818px;width:1px;height:35px;background:rgba(0,0,0,0.09)"></div><div class="abs" style="left:395.8px;top:818px;width:1px;height:35px;background:rgba(0,0,0,0.09)"></div><div class="abs" style="left:432.1px;top:818px;width:1px;height:35px;background:rgba(0,0,0,0.09)"></div><div class="abs" style="left:468.4px;top:818px;width:1px;height:35px;background:rgba(0,0,0,0.09)"></div><div class="abs" style="left:504.7px;top:818px;width:1px;height:35px;background:rgba(0,0,0,0.09)"></div><div class="abs" style="left:541.0px;top:818px;width:1px;height:35px;background:rgba(0,0,0,0.09)"></div><div class="abs" style="left:577.3px;top:818px;width:1px;height:35px;background:rgba(0,0,0,0.09)"></div><div class="abs" style="left:613.6px;top:818px;width:1px;height:35px;background:rgba(0,0,0,0.09)"></div><div class="abs" style="left:649.9px;top:818px;width:1px;height:35px;background:rgba(0,0,0,0.09)"></div><div class="abs" style="left:686.2px;top:818px;width:1px;height:35px;background:rgba(0,0,0,0.09)"></div><div class="abs" style="left:722.5px;top:818px;width:1px;height:35px;background:rgba(0,0,0,0.09)"></div><div class="abs" style="left:758.8px;top:818px;width:1px;height:35px;background:rgba(0,0,0,0.09)"></div><div class="abs" style="left:795.1px;top:818px;width:1px;height:35px;background:rgba(0,0,0,0.09)"></div><div class="abs" style="left:831.4px;top:818px;width:1px;height:35px;background:rgba(0,0,0,0.09)"></div><div class="abs" style="left:867.7px;top:818px;width:1px;height:35px;background:rgba(0,0,0,0.09)"></div><div class="abs" style="left:904.0px;top:818px;width:1px;height:35px;background:rgba(0,0,0,0.09)"></div><div class="abs" style="left:940.3px;top:818px;width:1px;height:35px;background:rgba(0,0,0,0.09)"></div><div class="abs" style="left:976.6px;top:818px;width:1px;height:35px;background:rgba(0,0,0,0.09)"></div><div class="abs" style="left:1012.9px;top:818px;width:1px;height:35px;background:rgba(0,0,0,0.09)"></div><div class="abs" style="left:1049.2px;top:818px;width:1px;height:35px;background:rgba(0,0,0,0.09)"></div><div class="abs" style="left:1085.5px;top:818px;width:1px;height:35px;background:rgba(0,0,0,0.09)"></div><div class="abs" style="left:1121.8px;top:818px;width:1px;height:35px;background:rgba(0,0,0,0.09)"></div><div class="abs" style="left:1158.1px;top:818px;width:1px;height:35px;background:rgba(255,255,255,0.05)"></div><div class="abs" style="left:1194.4px;top:818px;width:1px;height:35px;background:rgba(255,255,255,0.05)"></div><div class="abs" style="left:1230.7px;top:818px;width:1px;height:35px;background:rgba(255,255,255,0.05)"></div><div class="abs" style="left:213px;top:818px;width:5px;height:35px;background:#6cc52b;border-left:1px solid #3a4a2a"></div><div class="abs" style="left:4px;top:854px;width:1240px;height:12px;border-radius:6px;background:linear-gradient(#a4a4a4,#858585);border:1px solid #4e4e4e"></div><div class="txt" style="left:9.8px;top:855px;width:40px;text-align:center">-50</div><div class="txt" style="left:46.1px;top:855px;width:40px;text-align:center">-40</div><div class="txt" style="left:82.4px;top:855px;width:40px;text-align:center">-30</div><div class="txt" style="left:118.7px;top:855px;width:40px;text-align:center">-20</div><div class="txt" style="left:155.0px;top:855px;width:40px;text-align:center">-10</div><div class="txt" style="left:194.3px;top:855px;width:40px;text-align:center">0</div><div class="txt" style="left:230.6px;top:855px;width:40px;text-align:center">10</div><div class="txt" style="left:266.9px;top:855px;width:40px;text-align:center">20</div><div class="txt" style="left:303.2px;top:855px;width:40px;text-align:center">30</div><div class="txt" style="left:339.5px;top:855px;width:40px;text-align:center">40</div><div class="txt" style="left:375.8px;top:855px;width:40px;text-align:center">50</div><div class="txt" style="left:412.1px;top:855px;width:40px;text-align:center">60</div><div class="txt" style="left:448.4px;top:855px;width:40px;text-align:center">70</div><div class="txt" style="left:484.7px;top:855px;width:40px;text-align:center">80</div><div class="txt" style="left:521.0px;top:855px;width:40px;text-align:center">90</div><div class="txt" style="left:557.3px;top:855px;width:40px;text-align:center">100</div><div class="txt" style="left:593.6px;top:855px;width:40px;text-align:center">110</div><div class="txt" style="left:629.9px;top:855px;width:40px;text-align:center">120</div><div class="txt" style="left:666.2px;top:855px;width:40px;text-align:center">130</div><div class="txt" style="left:702.5px;top:855px;width:40px;text-align:center">140</div><div class="txt" style="left:738.8px;top:855px;width:40px;text-align:center">150</div><div class="txt" style="left:775.1px;top:855px;width:40px;text-align:center">160</div><div class="txt" style="left:811.4px;top:855px;width:40px;text-align:center">170</div><div class="txt" style="left:847.7px;top:855px;width:40px;text-align:center">180</div><div class="txt" style="left:884.0px;top:855px;width:40px;text-align:center">190</div><div class="txt" style="left:920.3px;top:855px;width:40px;text-align:center">200</div><div class="txt" style="left:956.6px;top:855px;width:40px;text-align:center">210</div><div class="txt" style="left:992.9px;top:855px;width:40px;text-align:center">220</div><div class="txt" style="left:1029.2px;top:855px;width:40px;text-align:center">230</div><div class="txt" style="left:1065.5px;top:855px;width:40px;text-align:center">240</div><div class="txt" style="left:1101.8px;top:855px;width:40px;text-align:center">250</div><div class="txt" style="left:1138.1px;top:855px;width:40px;text-align:center">260</div><div class="txt" style="left:1174.4px;top:855px;width:40px;text-align:center">270</div><div class="txt" style="left:1210.7px;top:855px;width:40px;text-align:center">280</div><div class="abs hdr" style="left:0;top:869px;width:1248px;height:26px"></div><div class="menu ra" style="left:9px;top:873px;width:31px;height:20px;padding-left:7px;padding-top:5px"></div><svg class="abs" style="left:30px;top:876px" width="7" height="13" viewBox="0 0 7 13"><path d="M3.5 0.5L6.5 5H0.5Z M3.5 12.5L6.5 8H0.5Z" fill="#cfcfcf"/></svg><div class="txt" style="left:52px;top:879px">View</div><div class="txt" style="left:96px;top:879px">Marker</div><div class="txt" style="left:150px;top:879px">Frame</div><div class="txt" style="left:203px;top:879px">Playback</div><div class="btn rl" style="left:262px;top:873px;width:20px;height:20px;padding:0;background:linear-gradient(#a6a6a6,#888)"></div><div class="btn rr" style="left:281px;top:873px;width:20px;height:20px;padding:0;background:linear-gradient(#a6a6a6,#888)"></div><div class="num" style="left:307px;top:873px;width:117px;height:20px;border-radius:10px 0 0 10px"></div><div class="num" style="left:423px;top:873px;width:110px;height:20px;border-radius:0 10px 10px 0"></div><div class="txt" style="left:322px;top:879px">Start:</div><div class="txt" style="left:394px;top:879px;width:12px;text-align:right">1</div><div class="txt" style="left:439px;top:879px">End:</div><div class="txt" style="left:488px;top:879px;width:29px;text-align:right">250</div><div class="num" style="left:540px;top:873px;width:89px;height:20px;border-radius:10px"></div><div class="txt" style="left:598px;top:879px;width:14px;text-align:right">1</div><svg class="abs" style="left:314px;top:880px" width="4" height="7" viewBox="0 0 4 7"><path d="M3.500 0.500L0.500 3.500 3.500 6.500z" fill="#848484"/></svg><svg class="abs" style="left:411px;top:880px" width="4" height="7" viewBox="0 0 4 7"><path d="M0.500 0.500L3.500 3.500 0.500 6.500z" fill="#848484"/></svg><svg class="abs" style="left:430px;top:880px" width="4" height="7" viewBox="0 0 4 7"><path d="M3.500 0.500L0.500 3.500 3.500 6.500z" fill="#848484"/></svg><svg class="abs" style="left:522px;top:880px" width="4" height="7" viewBox="0 0 4 7"><path d="M0.500 0.500L3.500 3.500 0.500 6.500z" fill="#848484"/></svg><svg class="abs" style="left:547px;top:880px" width="4" height="7" viewBox="0 0 4 7"><path d="M3.500 0.500L0.500 3.500 3.500 6.500z" fill="#848484"/></svg><svg class="abs" style="left:617px;top:880px" width="4" height="7" viewBox="0 0 4 7"><path d="M0.500 0.500L3.500 3.500 0.500 6.500z" fill="#848484"/></svg><div class="btn rl" style="left:646px;top:873px;width:21px;height:20px;padding:0;background:linear-gradient(#a6a6a6,#888)"></div><div class="btn " style="left:665.8px;top:873px;width:21px;height:20px;padding:0;background:linear-gradient(#a6a6a6,#888)"></div><div class="btn " style="left:685.5999999999999px;top:873px;width:21px;height:20px;padding:0;background:linear-gradient(#a6a6a6,#888)"></div><div class="btn " style="left:705.3999999999999px;top:873px;width:21px;height:20px;padding:0;background:linear-gradient(#a6a6a6,#888)"></div><div class="btn " style="left:725.1999999999998px;top:873px;width:21px;height:20px;padding:0;background:linear-gradient(#a6a6a6,#888)"></div><div class="btn rr" style="left:744.9999999999998px;top:873px;width:20px;height:20px;padding:0;background:linear-gradient(#a6a6a6,#888)"></div><div class="menu ra" style="left:771px;top:873px;width:114px;height:20px;padding-left:7px;padding-top:5px">No Sync</div><svg class="abs" style="left:875px;top:876px" width="7" height="13" viewBox="0 0 7 13"><path d="M3.5 0.5L6.5 5H0.5Z M3.5 12.5L6.5 8H0.5Z" fill="#cfcfcf"/></svg><div class="btn ra" style="left:902px;top:873px;width:19px;height:20px;padding:0;background:linear-gradient(#a6a6a6,#888)"></div><div class="btn rl" style="left:927px;top:873px;width:20px;height:20px;padding:0;background:linear-gradient(#a6a6a6,#888)"></div><div class="fld" style="left:946px;top:873px;width:111px;height:20px"></div><div class="btn " style="left:1056px;top:873px;width:21px;height:20px;padding:0;background:linear-gradient(#a6a6a6,#888)"></div><div class="btn rr" style="left:1076px;top:873px;width:21px;height:20px;padding:0;background:linear-gradient(#a6a6a6,#888)"></div><svg class="abs" style="left:12px;top:875px" width="16" height="16" viewBox="0 0 16 16"><circle cx="8" cy="8" r="6" fill="#f4f4f4" stroke="#333" stroke-width="1.200"/><path d="M8 8V4M8 8l-3 2" stroke="#444" stroke-width="1.200" fill="none"/></svg><svg class="abs" style="left:263px;top:875px" width="16" height="16" viewBox="0 0 16 16"><circle cx="8" cy="8" r="6.300" fill="#ffe7b8" stroke="#7a4a00" stroke-width="1.200"/><path d="M8 8V3.500M8 8H3.500" stroke="#d86a00" stroke-width="1.500" fill="none"/></svg><svg class="abs" style="left:283px;top:875px" width="16" height="16" viewBox="0 0 16 16"><path d="M5 7.500V5.500a3 3 0 0 1 6 0v2" fill="none" stroke="#e8e8e8" stroke-width="1.600"/><rect x="3.500" y="7.500" width="9" height="6.500" rx="1" fill="#dcdcdc" stroke="#333" stroke-width=".9"/><rect x="7.300" y="9.500" width="1.400" height="2.500" fill="#444"/></svg><svg class="abs" style="left:648.0px;top:875px" width="16" height="16" viewBox="0 0 16 16"><path d="M3 3v10" stroke="#fff" stroke-width="1.600"/><path d="M9 3L4 8l5 5zM14 3L9 8l5 5z" fill="#fff" stroke="#111" stroke-width=".9"/></svg><svg class="abs" style="left:667.8px;top:875px" width="16" height="16" viewBox="0 0 16 16"><path d="M8 3L2.500 8 8 13zM13.500 3L8 8l5.500 5z" fill="#fff" stroke="#111" stroke-width=".9"/></svg><svg class="abs" style="left:687.6px;top:875px" width="16" height="16" viewBox="0 0 16 16"><path d="M12.500 2L3 8l9.500 6z" fill="#fff" stroke="#111" stroke-width="1"/></svg><svg class="abs" style="left:707.4px;top:875px" width="16" height="16" viewBox="0 0 16 16"><path d="M3.500 2L13 8l-9.500 6z" fill="#fff" stroke="#111" stroke-width="1"/></svg><svg class="abs" style="left:727.2px;top:875px" width="16" height="16" viewBox="0 0 16 16"><path d="M8 3l5.500 5L8 13zM2.500 3L8 8l-5.500 5z" fill="#fff" stroke="#111" stroke-width=".9"/></svg><svg class="abs" style="left:747.0px;top:875px" width="16" height="16" viewBox="0 0 16 16"><path d="M13 3v10" stroke="#fff" stroke-width="1.600"/><path d="M7 3l5 5-5 5zM2 3l5 5-5 5z" fill="#fff" stroke="#111" stroke-width=".9"/></svg><svg class="abs" style="left:903px;top:875px" width="16" height="16" viewBox="0 0 16 16"><circle cx="8" cy="8" r="5" fill="#e64a19" stroke="#8a1f00" stroke-width="1"/></svg><svg class="abs" style="left:929px;top:875px" width="16" height="16" viewBox="0 0 16 16"><circle cx="5" cy="11.500" r="2.700" fill="none" stroke="#f4f4f4" stroke-width="1.800"/><path d="M7 9.500L13 3.500M11 5.500l2 2" stroke="#f4f4f4" stroke-width="1.800" fill="none"/></svg><svg class="abs" style="left:1058px;top:875px" width="16" height="16" viewBox="0 0 16 16"><circle cx="5" cy="11.500" r="2.700" fill="none" stroke="#f4f4f4" stroke-width="1.800"/><path d="M7 9.500L13 3.500M11 5.500l2 2" stroke="#f4f4f4" stroke-width="1.800" fill="none"/></svg><svg class="abs" style="left:1078px;top:875px" width="16" height="16" viewBox="0 0 16 16"><circle cx="5" cy="11.500" r="2.700" fill="none" stroke="#e8e8e8" stroke-width="1.800"/><path d="M7 9.500L13 3.500M11 5.500l2 2" stroke="#e8e8e8" stroke-width="1.800" fill="none"/></svg><svg class="abs" style="left:1078px;top:875px" width="16" height="16" viewBox="0 0 16 16"><path d="M2 2l12 12M14 2L2 14" stroke="#d8305a" stroke-width="1.800"/></svg>
<div class="abs" style="left:1248px;top:71px;width:1px;height:824px;background:#0a0a0a"></div><div class="menu ra" style="left:1257px;top:74px;width:32px;height:20px;padding-left:7px;padding-top:5px"></div><svg class="abs" style="left:1279px;top:77px" width="7" height="13" viewBox="0 0 7 13"><path d="M3.5 0.5L6.5 5H0.5Z M3.5 12.5L6.5 8H0.5Z" fill="#cfcfcf"/></svg><svg class="abs" style="left:1260px;top:76px" width="16" height="16" viewBox="0 0 16 16"><path d="M3.500 2.500v10.500h4M3.500 8h4M3.500 3.500h3" stroke="#111" stroke-width="1" fill="none"/><rect x="2" y="1.500" width="4" height="2.500" fill="#f09030"/><rect x="7.500" y="6.800" width="6" height="2.400" fill="#f2f2f2"/><rect x="7.500" y="11.800" width="6" height="2.400" fill="#f2f2f2"/><rect x="7" y="2.500" width="6" height="2" fill="#ddd"/></svg><div class="txt" style="left:1301px;top:80px">View</div><div class="txt" style="left:1345px;top:80px">Search</div><div class="menu rl" style="left:1392px;top:74px;width:60px;height:20px;padding-top:5px;padding-left:8px">All Scenes</div><div class="abs" style="left:1250px;top:97px;width:111px;height:14px;background:#8b8b8b"></div><div class="abs" style="left:1363px;top:97px;width:18px;height:94px;background:rgba(255,255,255,0.055)"></div><div class="abs" style="left:1383px;top:97px;width:18px;height:94px;background:rgba(255,255,255,0.055)"></div><div class="abs" style="left:1403px;top:97px;width:18px;height:94px;background:rgba(255,255,255,0.055)"></div><div class="txt" style="left:1290px;top:98px">Scene</div><div class="txt" style="left:1311px;top:118px">RenderLay</div><div class="txt" style="left:1311px;top:138px">World</div><div class="txt" style="left:1311px;top:158px">Camera</div><div class="txt" style="left:1311px;top:178px">Lamp</div><svg class="abs" style="left:1252.5px;top:97.5px" width="11" height="11" viewBox="0 0 11 11"><circle cx="5.500" cy="5.500" r="4.300" fill="#f0f0f0" stroke="#222" stroke-width="1"/><path d="M3.200 5.500h4.600" stroke="#111" stroke-width="1.100"/></svg><svg class="abs" style="left:1272px;top:95px" width="16" height="16" viewBox="0 0 16 16"><rect x="8" y="1" width="5.500" height="9" rx="1.200" fill="#5f86e0" stroke="#1f3a80" stroke-width=".8"/><circle cx="5.500" cy="11" r="3.800" fill="#f2f2f2" stroke="#444" stroke-width=".8"/><circle cx="10" cy="12" r="2" fill="#b8c8ee" stroke="#2b3a66" stroke-width=".5"/></svg><svg class="abs" style="left:1277.5px;top:116.5px" width="11" height="11" viewBox="0 0 11 11"><circle cx="5.500" cy="5.500" r="4.300" fill="#f0f0f0" stroke="#222" stroke-width="1"/><path d="M3.200 5.500h4.600" stroke="#111" stroke-width="1.100"/><path d="M5.500 3.200v4.600" stroke="#111" stroke-width="1.100"/></svg><svg class="abs" style="left:1291px;top:114px" width="16" height="16" viewBox="0 0 16 16"><rect x="4" y="4.500" width="10.500" height="10" fill="#e8dca0" stroke="#555" stroke-width=".8" transform="rotate(8 9 9)"/><rect x="1.500" y="1.500" width="10.500" height="10.500" fill="#f6f6f6" stroke="#333" stroke-width=".9"/><path d="M7 3.500v5M7 3.500h2.500v2" stroke="#2a55c8" stroke-width="1.600" fill="none"/><circle cx="6" cy="8.800" r="1.500" fill="#2a55c8"/></svg><svg class="abs" style="left:1291px;top:135px" width="16" height="16" viewBox="0 0 16 16"><defs><radialGradient id="wg" cx=".4" cy=".35" r=".75"><stop offset="0" stop-color="#a8c4e8"/><stop offset=".6" stop-color="#4d7ab8"/><stop offset="1" stop-color="#1f3f70"/></radialGradient></defs><circle cx="8" cy="8" r="6.800" fill="url(#wg)" stroke="#c8d4e8" stroke-width="1"/><path d="M4 6c2-2 4-1 5 1s-1 4-3 4-3-3-2-5z" fill="#7fa0a8" opacity=".7"/></svg><svg class="abs" style="left:1271.5px;top:156.5px" width="11" height="11" viewBox="0 0 11 11"><circle cx="5.500" cy="5.500" r="4.300" fill="#f0f0f0" stroke="#222" stroke-width="1"/><path d="M3.200 5.500h4.600" stroke="#111" stroke-width="1.100"/><path d="M5.500 3.200v4.600" stroke="#111" stroke-width="1.100"/></svg><svg class="abs" style="left:1291px;top:154px" width="16" height="16" viewBox="0 0 16 16"><circle cx="5" cy="4.500" r="3" fill="#f09020" stroke="#7a3f00" stroke-width=".8"/><circle cx="11" cy="4.500" r="3" fill="#f09020" stroke="#7a3f00" stroke-width=".8"/><rect x="2.500" y="7" width="10" height="6.500" rx="1" fill="#f09020" stroke="#7a3f00" stroke-width=".8"/><path d="M12.500 9l3-1.500v5l-3-1.500z" fill="#f09020" stroke="#7a3f00" stroke-width=".8"/></svg><svg class="abs" style="left:1271.5px;top:176.5px" width="11" height="11" viewBox="0 0 11 11"><circle cx="5.500" cy="5.500" r="4.300" fill="#f0f0f0" stroke="#222" stroke-width="1"/><path d="M3.200 5.500h4.600" stroke="#111" stroke-width="1.100"/><path d="M5.500 3.200v4.600" stroke="#111" stroke-width="1.100"/></svg><svg class="abs" style="left:1291px;top:174px" width="16" height="16" viewBox="0 0 16 16"><path d="M8 1.500a4.500 4.500 0 0 1 2.500 8.200V11.500h-5V9.700A4.500 4.500 0 0 1 8 1.500z" fill="#f6d890" stroke="#a8701a" stroke-width=".9"/><path d="M5.800 12.500h4.400M6 14h4" stroke="#c88a20" stroke-width="1.300"/></svg><div class="abs" style="left:1263px;top:103px;width:12px;height:1px;background:#4a4a4a"></div><div class="abs" style="left:1271px;top:110px;width:1px;height:80px;background:#5a5a5a"></div><div class="abs" style="left:1282px;top:162px;width:9px;height:1px;background:#4a4a4a"></div><div class="abs" style="left:1282px;top:182px;width:12px;height:1px;background:#4a4a4a"></div><div class="abs" style="left:1359px;top:156px;width:2px;height:12px;background:#5c5c5c"></div><div class="abs" style="left:1349px;top:176px;width:2px;height:12px;background:#5c5c5c"></div><svg class="abs" style="left:1366px;top:156px" width="16" height="12" viewBox="0 0 16 12"><path d="M1 6C3.500 2 12.500 2 15 6 12.500 10 3.500 10 1 6z" fill="#fff" stroke="#222" stroke-width="1"/><circle cx="8" cy="6" r="2.300" fill="#333"/></svg><svg class="abs" style="left:1389px;top:154px" width="12" height="16" viewBox="0 0 12 16"><path d="M2 1.500v11l2.800-2.500 2 4.500 2-1-2-4.300h3.700z" fill="#fff" stroke="#111" stroke-width="1"/></svg><svg class="abs" style="left:1405px;top:155px" width="16" height="14" viewBox="0 0 16 14"><rect x="1.500" y="3.500" width="13" height="9.500" rx="1" fill="#e4e4e4" stroke="#222" stroke-width="1"/><rect x="3.500" y="1.500" width="4" height="2" fill="#ddd" stroke="#222" stroke-width=".8"/><circle cx="8.500" cy="8.300" r="2.800" fill="#8a8a8a" stroke="#222" stroke-width=".9"/></svg><svg class="abs" style="left:1366px;top:176px" width="16" height="12" viewBox="0 0 16 12"><path d="M1 6C3.500 2 12.500 2 15 6 12.500 10 3.500 10 1 6z" fill="#fff" stroke="#222" stroke-width="1"/><circle cx="8" cy="6" r="2.300" fill="#333"/></svg><svg class="abs" style="left:1389px;top:174px" width="12" height="16" viewBox="0 0 12 16"><path d="M2 1.500v11l2.800-2.500 2 4.500 2-1-2-4.300h3.700z" fill="#fff" stroke="#111" stroke-width="1"/></svg><svg class="abs" style="left:1405px;top:175px" width="16" height="14" viewBox="0 0 16 14"><rect x="1.500" y="3.500" width="13" height="9.500" rx="1" fill="#e4e4e4" stroke="#222" stroke-width="1"/><rect x="3.500" y="1.500" width="4" height="2" fill="#ddd" stroke="#222" stroke-width=".8"/><circle cx="8.500" cy="8.300" r="2.800" fill="#8a8a8a" stroke="#222" stroke-width=".9"/></svg><div class="abs" style="left:1423px;top:104px;width:12px;height:84px;border-radius:6px;background:#5a5a5a"></div><div class="abs" style="left:1423px;top:104px;width:12px;height:50px;border-radius:6px;background:linear-gradient(90deg,#8a8a8a,#707070);border:1px solid #4a4a4a"></div><div class="abs" style="left:1254px;top:193px;width:163px;height:12px;border-radius:6px;background:#5a5a5a"></div><div class="abs" style="left:1254px;top:193px;width:93px;height:12px;border-radius:6px;background:linear-gradient(#8c8c8c,#707070);border:1px solid #4a4a4a"></div><div class="abs" style="left:1250px;top:210px;width:190px;height:2px;background:#222"></div><div class="abs" style="left:1250px;top:212px;width:190px;height:24px;background:#727272"></div><div class="abs" style="left:1250px;top:215px;width:190px;height:18px;background:#3a3a3a;border-top:1px solid #2c2c2c;border-bottom:1px solid #2c2c2c"></div><div class="abs" style="left:1250px;top:212px;width:190px;height:24px;overflow:hidden"><div class="abs" style="left:-9px;top:4px;width:19px;height:16px;background:#515151"></div><div class="abs" style="left:11px;top:4px;width:19px;height:16px;background:#515151"></div><div class="abs" style="left:31px;top:4px;width:19px;height:16px;background:#515151"></div><div class="abs" style="left:51px;top:4px;width:19px;height:16px;background:#515151"></div><div class="abs" style="left:71px;top:4px;width:19px;height:16px;background:#515151"></div><div class="abs" style="left:91px;top:4px;width:19px;height:16px;background:#515151"></div><div class="abs" style="left:111px;top:4px;width:19px;height:16px;background:#515151"></div><div class="abs" style="left:131px;top:4px;width:19px;height:16px;background:#515151"></div><div class="abs" style="left:151px;top:4px;width:19px;height:16px;background:#6a93d8"></div><div class="abs" style="left:171px;top:4px;width:19px;height:16px;background:#515151"></div><svg class="abs" style="left:-8px;top:4px" width="16" height="16" viewBox="0 0 16 16"><rect x="1" y="4" width="12" height="9" fill="none" stroke="#ddd" stroke-width="1.500"/><rect x="4" y="7" width="6" height="3" fill="#ccc"/></svg><svg class="abs" style="left:13px;top:4px" width="16" height="16" viewBox="0 0 16 16"><rect x="5" y="5" width="9" height="9" fill="#d8d0a0" stroke="#555" stroke-width=".7"/><rect x="2" y="2" width="10" height="10" fill="#e8e8e8" stroke="#444" stroke-width=".8"/><path d="M7 4v4.500M7 4h2v1.500" stroke="#5a7ad0" stroke-width="1.300" fill="none"/></svg><svg class="abs" style="left:33px;top:4px" width="16" height="16" viewBox="0 0 16 16"><circle cx="4" cy="4" r="3" fill="#c9e27a" opacity=".9"/><rect x="8" y="2" width="5.500" height="9" rx="1.200" fill="#7f9fe6" stroke="#2b3a66" stroke-width=".7"/><circle cx="6" cy="11" r="3.600" fill="#f2f2f2" stroke="#333" stroke-width=".7"/><circle cx="11.500" cy="12" r="2.200" fill="#9ab0e0" stroke="#2b3a66" stroke-width=".6"/></svg><svg class="abs" style="left:53px;top:4px" width="16" height="16" viewBox="0 0 16 16"><defs><radialGradient id="wg" cx=".4" cy=".35" r=".75"><stop offset="0" stop-color="#a8c4e8"/><stop offset=".6" stop-color="#4d7ab8"/><stop offset="1" stop-color="#1f3f70"/></radialGradient></defs><circle cx="8" cy="8" r="6.800" fill="url(#wg)" stroke="#c8d4e8" stroke-width="1"/><path d="M4 6c2-2 4-1 5 1s-1 4-3 4-3-3-2-5z" fill="#7fa0a8" opacity=".7"/></svg><svg class="abs" style="left:73px;top:4px" width="16" height="16" viewBox="0 0 16 16"><path d="M2 4.500L8 2l6 2.500V11.500L8 14.500 2 11.500z" fill="#d89858" stroke="#5a3a10" stroke-width=".9"/><path d="M2 4.500L8 7.200 14 4.500M8 7.200v7.300" fill="none" stroke="#5a3a10" stroke-width=".7"/></svg><svg class="abs" style="left:93px;top:4px" width="16" height="16" viewBox="0 0 16 16"><rect x="1.500" y="6" width="8" height="5" rx="2.500" fill="none" stroke="#ddd" stroke-width="1.600" transform="rotate(-35 8 8)"/><rect x="7" y="6" width="8" height="5" rx="2.500" fill="none" stroke="#ddd" stroke-width="1.600" transform="rotate(-35 8 8)"/></svg><svg class="abs" style="left:113px;top:4px" width="16" height="16" viewBox="0 0 16 16"><path d="M3 13.500L10 6.500" stroke="#9ab0d8" stroke-width="2.600"/><path d="M9 3a3.500 3.500 0 0 0 4 4.500l1.500-1.500-2.500-.5-.5-2.500 1.500-1.500A3.500 3.500 0 0 0 9 3z" fill="#e8e8e8" stroke="#444" stroke-width=".6"/></svg><svg class="abs" style="left:133px;top:4px" width="16" height="16" viewBox="0 0 16 16"><path d="M2.500 3.500h11L8 14z" fill="none" stroke="#222" stroke-width="1"/><g fill="#e8e8e8" stroke="#333" stroke-width=".5"><rect x="1.500" y="2.500" width="2.400" height="2.400"/><rect x="6.800" y="12.500" width="2.400" height="2.400"/></g><circle cx="13" cy="3.500" r="2" fill="#9ad06a"/></svg><svg class="abs" style="left:153px;top:4px" width="16" height="16" viewBox="0 0 16 16"><defs><radialGradient id="mg" cx=".35" cy=".3" r=".8"><stop offset="0" stop-color="#fff"/><stop offset=".45" stop-color="#e8b8a8"/><stop offset="1" stop-color="#7a2f1f"/></radialGradient></defs><circle cx="8" cy="8" r="6.500" fill="url(#mg)" stroke="#222" stroke-width=".7"/></svg><svg class="abs" style="left:173px;top:4px" width="16" height="16" viewBox="0 0 16 16"><g fill="#e8a8a0"><rect x="1" y="1" width="3.500" height="3.500"/><rect x="8" y="1" width="3.500" height="3.500"/><rect x="4.500" y="4.500" width="3.500" height="3.500"/><rect x="11.500" y="4.500" width="3.500" height="3.500"/><rect x="1" y="8" width="3.500" height="3.500"/><rect x="8" y="8" width="3.500" height="3.500"/><rect x="4.500" y="11.500" width="3.500" height="3.500"/><rect x="11.500" y="11.500" width="3.500" height="3.500"/></g><g fill="#f4f4f4"><rect x="4.500" y="1" width="3.500" height="3.500"/><rect x="11.500" y="1" width="3.500" height="3.500"/><rect x="1" y="4.500" width="3.500" height="3.500"/><rect x="8" y="4.500" width="3.500" height="3.500"/><rect x="4.500" y="8" width="3.500" height="3.500"/><rect x="11.500" y="8" width="3.500" height="3.500"/><rect x="1" y="11.500" width="3.500" height="3.500"/><rect x="8" y="11.500" width="3.500" height="3.500"/></g></svg></div><svg class="abs" style="left:1257px;top:246px" width="18" height="18" viewBox="0 0 18 18"><path d="M10.500 2.500l5 5-2 .5-2.500 2.500-.5 3.500-6-6 3.500-.5 2.500-2.500z" fill="#eee" stroke="#222" stroke-width="1"/><path d="M7.500 10.500L2 16" stroke="#222" stroke-width="1.500"/></svg><svg class="abs" style="left:1281px;top:246px" width="16" height="16" viewBox="0 0 16 16"><circle cx="4" cy="4" r="3" fill="#c9e27a" opacity=".9"/><rect x="8" y="2" width="5.500" height="9" rx="1.200" fill="#7f9fe6" stroke="#2b3a66" stroke-width=".7"/><circle cx="6" cy="11" r="3.600" fill="#f2f2f2" stroke="#333" stroke-width=".7"/><circle cx="11.500" cy="12" r="2.200" fill="#9ab0e0" stroke="#2b3a66" stroke-width=".6"/></svg><svg class="abs" style="left:1301px;top:251px" width="6" height="8" viewBox="0 0 6 8"><path d="M1 0.500L5 4 1 7.500z" fill="#222"/></svg><svg class="abs" style="left:1321px;top:247px" width="16" height="16" viewBox="0 0 16 16"><path d="M2 4.500L8 2l6 2.500V11.500L8 14.500 2 11.500z" fill="#f7b040" stroke="#6a3a00" stroke-width=".9"/><path d="M2 4.500L8 7.200 14 4.500 8 2z" fill="#ffd88a"/><path d="M8 7.200V14.500L14 11.500V4.500z" fill="#d88418"/><path d="M2 4.500L8 7.200 14 4.500M8 7.200v7.300" fill="none" stroke="#6a3a00" stroke-width=".7"/></svg><svg class="abs" style="left:1383px;top:251px" width="6" height="8" viewBox="0 0 6 8"><path d="M1 0.500L5 4 1 7.500z" fill="#222"/></svg><div class="txt" style="left:1342px;top:250px">Plane</div><div class="abs" style="left:1257px;top:281px;width:147px;height:49px;border:1px solid #3c3c3c;border-radius:4px;background:#747474"></div><div class="abs" style="left:1333px;top:315px;width:14px;height:1px;background:#222;box-shadow:0 3px 0 #222"></div><div class="btn rt" style="left:1412px;top:282px;width:20px;height:19px;padding:0;background:linear-gradient(#a6a6a6,#888)"></div><div class="btn " style="left:1412px;top:300px;width:20px;height:21px;padding:0;background:linear-gradient(#a6a6a6,#888)"></div><div class="menu rb" style="left:1412px;top:320px;width:20px;height:21px;padding-left:7px;padding-top:5px"></div><div class="btn rl" style="left:1257px;top:347px;width:59px;height:19px;padding:4px 0 0 0;text-align:center">Assign</div><div class="btn" style="left:1315px;top:347px;width:59px;height:19px;padding:4px 0 0 0;text-align:center">Select</div><div class="btn rr" style="left:1373px;top:347px;width:59px;height:19px;padding:4px 0 0 0;text-align:center">Deselect</div><div class="menu rl" style="left:1257px;top:372px;width:32px;height:19px;padding-left:7px;padding-top:5px"></div><svg class="abs" style="left:1279px;top:375px" width="7" height="13" viewBox="0 0 7 13"><path d="M3.5 0.5L6.5 5H0.5Z M3.5 12.5L6.5 8H0.5Z" fill="#cfcfcf"/></svg><div class="btn rr" style="left:1288px;top:372px;width:77px;height:19px;padding:4px 0 0 35px">New</div><svg class="abs" style="left:1266px;top:311px" width="10" height="10" viewBox="0 0 10 10"><circle cx="5" cy="5" r="3.200" fill="none" stroke="#555" stroke-width="1"/><circle cx="5" cy="5" r="1" fill="#999"/></svg><svg class="abs" style="left:1415px;top:284px" width="14" height="14" viewBox="0 0 14 14"><path d="M5.500 1.500h3v4h4v3h-4v4h-3v-4h-4v-3h4z" fill="#fff" stroke="#222" stroke-width="1"/></svg><svg class="abs" style="left:1415px;top:303px" width="14" height="14" viewBox="0 0 14 14"><path d="M1.500 5.500h11v3h-11z" fill="#fff" stroke="#222" stroke-width="1"/></svg><svg class="abs" style="left:1416px;top:325px" width="12" height="10" viewBox="0 0 12 10"><path d="M1 1h10L6 9z" fill="#111"/></svg><svg class="abs" style="left:1260px;top:374px" width="16" height="16" viewBox="0 0 16 16"><defs><radialGradient id="mg" cx=".35" cy=".3" r=".8"><stop offset="0" stop-color="#fff"/><stop offset=".45" stop-color="#e8b8a8"/><stop offset="1" stop-color="#7a2f1f"/></radialGradient></defs><circle cx="8" cy="8" r="6.500" fill="url(#mg)" stroke="#222" stroke-width=".7"/></svg><svg class="abs" style="left:1293px;top:374px" width="14" height="14" viewBox="0 0 14 14"><path d="M5.500 1.500h3v4h4v3h-4v4h-3v-4h-4v-3h4z" fill="#fff" stroke="#222" stroke-width="1"/></svg><svg class="abs" style="left:0px;top:58px" width="12" height="12" viewBox="0 0 12 12"><path d="M0 1L11 12M0 5L7 12M0 9L3 12" stroke="#2e2e2e" stroke-width="1" fill="none"/><path d="M0 2L10 12M0 6L6 12M0 10L2 12" stroke="#909090" stroke-width="1" fill="none"/></svg><svg class="abs" style="left:0px;top:805px" width="12" height="12" viewBox="0 0 12 12"><path d="M0 1L11 12M0 5L7 12M0 9L3 12" stroke="#2e2e2e" stroke-width="1" fill="none"/><path d="M0 2L10 12M0 6L6 12M0 10L2 12" stroke="#909090" stroke-width="1" fill="none"/></svg><svg class="abs" style="left:1236px;top:818px" width="12" height="12" viewBox="0 0 12 12"><path d="M1 0L12 11M5 0L12 7M9 0L12 3" stroke="#2e2e2e" stroke-width="1" fill="none"/><path d="M2 0L12 10M6 0L12 6M10 0L12 2" stroke="#909090" stroke-width="1" fill="none"/></svg><svg class="abs" style="left:0px;top:883px" width="12" height="12" viewBox="0 0 12 12"><path d="M0 1L11 12M0 5L7 12M0 9L3 12" stroke="#2e2e2e" stroke-width="1" fill="none"/><path d="M0 2L10 12M0 6L6 12M0 10L2 12" stroke="#909090" stroke-width="1" fill="none"/></svg><svg class="abs" style="left:1428px;top:71px" width="12" height="12" viewBox="0 0 12 12"><path d="M1 0L12 11M5 0L12 7M9 0L12 3" stroke="#2e2e2e" stroke-width="1" fill="none"/><path d="M2 0L12 10M6 0L12 6M10 0L12 2" stroke="#909090" stroke-width="1" fill="none"/></svg><svg class="abs" style="left:1249px;top:198px" width="12" height="12" viewBox="0 0 12 12"><path d="M0 1L11 12M0 5L7 12M0 9L3 12" stroke="#2e2e2e" stroke-width="1" fill="none"/><path d="M0 2L10 12M0 6L6 12M0 10L2 12" stroke="#909090" stroke-width="1" fill="none"/></svg><svg class="abs" style="left:1428px;top:212px" width="12" height="12" viewBox="0 0 12 12"><path d="M1 0L12 11M5 0L12 7M9 0L12 3" stroke="#2e2e2e" stroke-width="1" fill="none"/><path d="M2 0L12 10M6 0L12 6M10 0L12 2" stroke="#909090" stroke-width="1" fill="none"/></svg><svg class="abs" style="left:1249px;top:883px" width="12" height="12" viewBox="0 0 12 12"><path d="M0 1L11 12M0 5L7 12M0 9L3 12" stroke="#2e2e2e" stroke-width="1" fill="none"/><path d="M0 2L10 12M0 6L6 12M0 10L2 12" stroke="#909090" stroke-width="1" fill="none"/></svg><div class="abs" style="left:0;top:895px;width:1440px;height:5px;background:#000"></div><svg class="abs" style="left:0;top:890px" width="5" height="5" viewBox="0 0 5 5"><path d="M0 0A5 5 0 0 0 5 5H0z" fill="#000"/></svg><svg class="abs" style="left:1435px;top:890px" width="5" height="5" viewBox="0 0 5 5"><path d="M5 0A5 5 0 0 1 0 5H5z" fill="#000"/></svg>
</body></html>
